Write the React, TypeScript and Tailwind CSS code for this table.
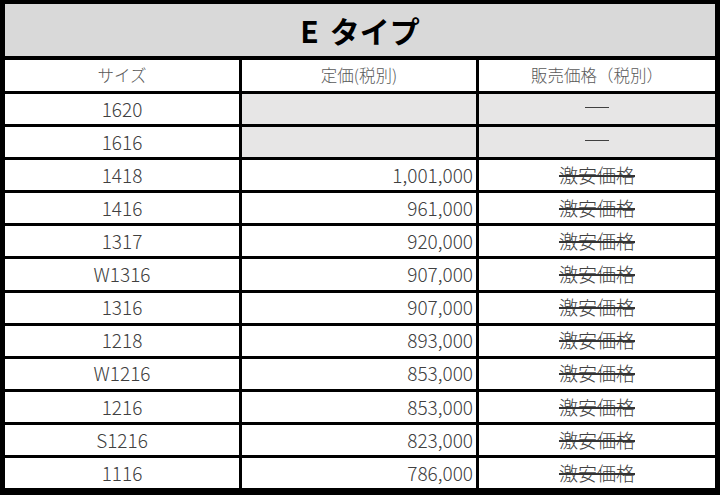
const rows: Array<{ size: string; price: string; sale: string; gray?: boolean }> = [
  { size: "1620", price: "", sale: "", gray: true },
  { size: "1616", price: "", sale: "", gray: true },
  { size: "1418", price: "1,001,000", sale: "激安価格" },
  { size: "1416", price: "961,000", sale: "激安価格" },
  { size: "1317", price: "920,000", sale: "激安価格" },
  { size: "W1316", price: "907,000", sale: "激安価格" },
  { size: "1316", price: "907,000", sale: "激安価格" },
  { size: "1218", price: "893,000", sale: "激安価格" },
  { size: "W1216", price: "853,000", sale: "激安価格" },
  { size: "1216", price: "853,000", sale: "激安価格" },
  { size: "S1216", price: "823,000", sale: "激安価格" },
  { size: "1116", price: "786,000", sale: "激安価格" },
]

export default function App() {
  return (
    <div
      className="w-[720px] h-[495px] bg-white"
      style={{ fontFamily: '"Noto Sans CJK JP", "Noto Sans", sans-serif' }}
    >
      <div className="w-[720px] h-[495px] bg-black pt-[4px] pl-[5px] pr-[5px] pb-[7px] flex flex-col">
        {/* Title */}
        <div className="h-[52px] bg-[#d9d9d9] flex items-center justify-center">
          <span className="text-[30px] font-bold text-black leading-none">
            E<span className="inline-block w-[11px]"></span>タイプ
          </span>
        </div>

        {/* Header */}
        <div className="mt-[4px] h-[31px] grid grid-cols-[234px_234px_1fr] gap-x-[3px] font-light">
          <div className="bg-white flex items-center justify-center text-[16.5px] text-[#595959]">サイズ</div>
          <div className="bg-white flex items-center justify-center text-[16.5px] text-[#595959]">定価(税別)</div>
          <div className="bg-white flex items-center justify-center text-[16.5px] text-[#595959]">販売価格（税別）</div>
        </div>

        {/* Data rows */}
        <div className="mt-[3px] flex-1 grid grid-rows-12 gap-y-[3px] font-light">
          {rows.map((r) => (
            <div key={r.size} className="grid grid-cols-[234px_234px_1fr] gap-x-[3px]">
              <div className="bg-white flex items-center justify-center text-[19px] text-[#404040]">
                {r.size}
              </div>
              <div
                className={`${r.gray ? "bg-[#e7e6e6]" : "bg-white"} flex items-center justify-end pr-[3px] text-[19px] text-[#404040]`}
              >
                {r.price}
              </div>
              <div
                className={`${r.gray ? "bg-[#e7e6e6]" : "bg-white"} flex items-center justify-center text-[19px] text-[#404040]`}
              >
                {r.gray ? (
                  <span className="block w-[24px] h-[1.5px] bg-[#404040] -mt-[3px]" aria-label="―"></span>
                ) : (
                  <span className="line-through decoration-[#333333] decoration-[1.5px]">{r.sale}</span>
                )}
              </div>
            </div>
          ))}
        </div>
      </div>
    </div>
  )
}
